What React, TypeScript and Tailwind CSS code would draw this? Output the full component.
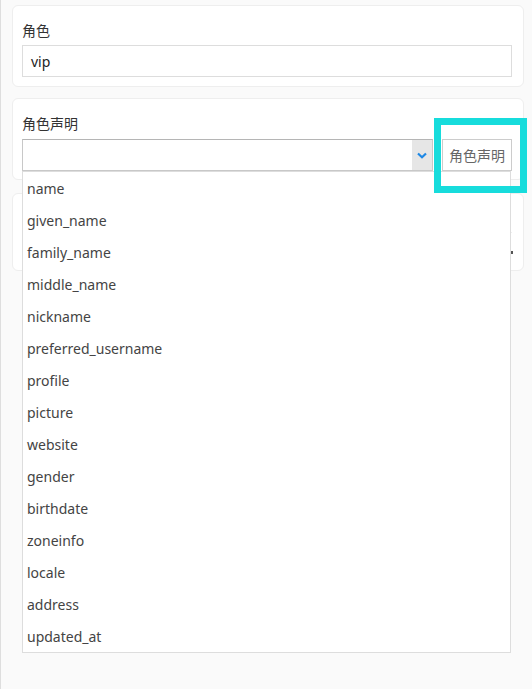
const claims = [
  "name",
  "given_name",
  "family_name",
  "middle_name",
  "nickname",
  "preferred_username",
  "profile",
  "picture",
  "website",
  "gender",
  "birthdate",
  "zoneinfo",
  "locale",
  "address",
  "updated_at",
]

function Card({ children, className = "" }: { children: React.ReactNode; className?: string }) {
  return (
    <div className={`rounded-[6px] border border-[#eeeeee] bg-white pl-[9px] pr-[11px] ${className}`}>{children}</div>
  )
}

export default function App() {
  return (
    <div
      className="relative h-[689px] w-[532px] overflow-hidden border-l border-[#dedede] bg-[#fafafa] pl-[11px] pr-[8px] pt-[5px] text-[14px]"
      style={{ fontFamily: '"Noto Sans", "Noto Sans CJK SC", sans-serif' }}
    >
      <Card className="h-[82px] pt-[15px]">
        <div className="h-[20px] leading-[20px] text-[#333]">角色</div>
        <div className="mt-[4px] flex h-[32px] items-center border border-[#dddddd] px-[8px] text-[#222]">vip</div>
      </Card>

      <Card className="relative z-10 mt-[11px] h-[82px] pt-[15px]">
        <div className="h-[20px] leading-[20px] text-[#333]">角色声明</div>
        <div className="mt-[5px] flex h-[32px] gap-[9px]">
          <div className="relative flex w-[411px] border border-[#c8c8c8] border-t-[#b5b5b5] bg-white">
            <div className="flex-1" />
            <div className="flex w-[20px] items-center justify-center bg-[#e6e6e6]">
              <svg width="10" height="7" viewBox="0 0 10 7" fill="none">
                <path d="M1 1.5 L5 5.2 L9 1.5" stroke="#1e88e5" strokeWidth="2.2" />
              </svg>
            </div>
            <div className="absolute left-[-1px] top-[31px] w-[489px] border border-[#dddddd] bg-white">
              {claims.map((c) => (
                <div key={c} className="flex h-[32px] items-center pl-[4px] text-[#444]">
                  {c}
                </div>
              ))}
            </div>
          </div>
          <button className="w-[70px] border border-[#cccccc] bg-white text-[#666]">角色声明</button>
        </div>
      </Card>

      <Card className="mt-[13px] h-[78px]">
        <div className="mt-[38px] h-px bg-[#eeeeee]" />
        <div className="mt-[18px] flex justify-end">
          <span className="mr-[-1px] h-[3px] w-[3px] bg-[#555]" />
        </div>
      </Card>

      <div className="absolute left-[433px] top-[118px] z-20 h-[75px] w-[93px] border-[7px] border-[#17dcdc]" />
    </div>
  )
}
